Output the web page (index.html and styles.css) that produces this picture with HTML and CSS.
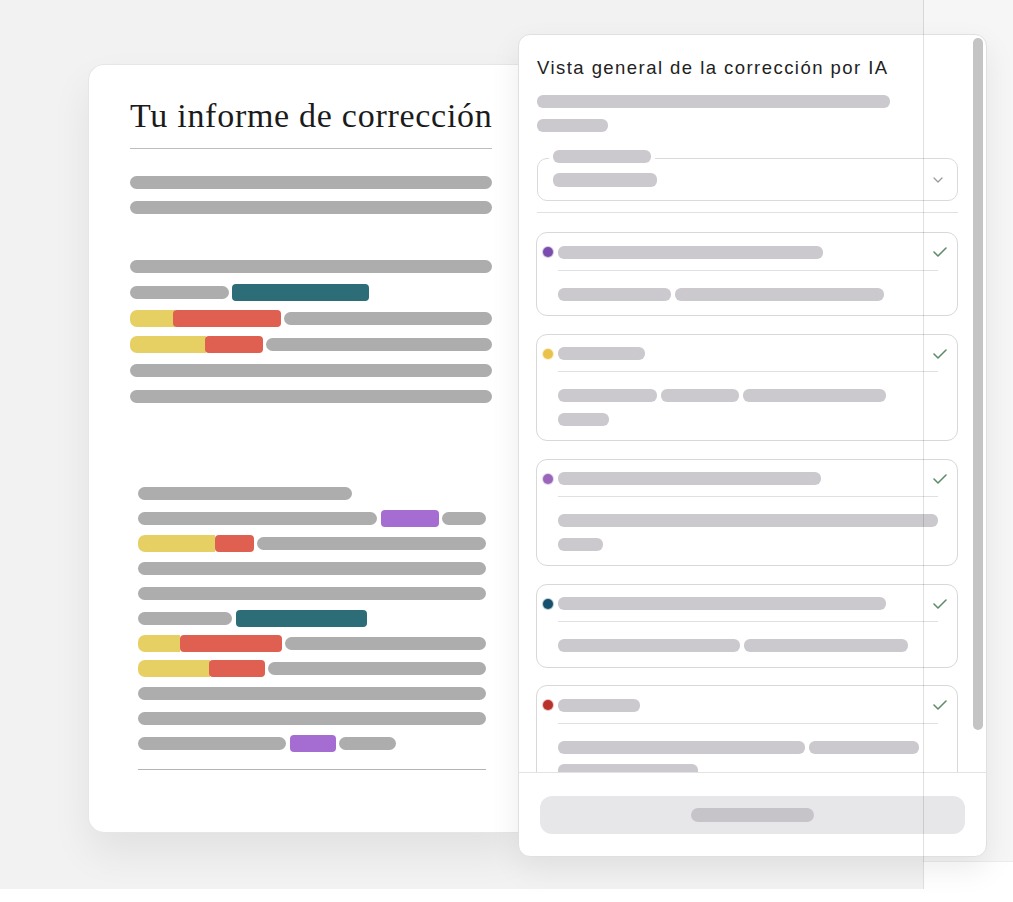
FILE: index.html
```html
<!DOCTYPE html>
<html lang="es">
<head>
<meta charset="utf-8">
<title>Informe de corrección</title>
<link rel="stylesheet" href="styles.css">
</head>
<body>
<div class="stage">
  <div class="strip"></div>
  <div class="scene">
    <article class="report">
      <h1 class="report-title">Tu informe de corrección</h1>
      <hr class="report-rule">

      <div class="para p1">
        <div class="row"><span class="g fill"></span></div>
        <div class="row"><span class="g fill"></span></div>
      </div>

      <div class="para p2">
        <div class="row"><span class="g fill"></span></div>
        <div class="row"><span class="g" style="width:99px"></span><span class="mark teal" style="width:137px"></span></div>
        <div class="row"><span class="hl"><span class="y" style="width:45px"></span><span class="r" style="width:108px;margin-left:-2px"></span></span><span class="g fill"></span></div>
        <div class="row"><span class="hl"><span class="y" style="width:76px"></span><span class="r" style="width:58px;margin-left:-1px"></span></span><span class="g fill"></span></div>
        <div class="row"><span class="g fill"></span></div>
        <div class="row"><span class="g fill"></span></div>
      </div>

      <div class="para p3">
        <div class="row"><span class="g" style="width:214px"></span></div>
        <div class="row"><span class="g" style="width:239px"></span><span class="mark purple gap1" style="width:58px"></span><span class="g fill"></span></div>
        <div class="row"><span class="hl"><span class="y" style="width:77px"></span><span class="r" style="width:39px"></span></span><span class="g fill"></span></div>
        <div class="row"><span class="g fill"></span></div>
        <div class="row"><span class="g fill"></span></div>
        <div class="row"><span class="g" style="width:94px"></span><span class="mark teal gap1" style="width:131px"></span></div>
        <div class="row"><span class="hl"><span class="y" style="width:42px"></span><span class="r" style="width:102px"></span></span><span class="g fill"></span></div>
        <div class="row"><span class="hl"><span class="y" style="width:72px"></span><span class="r" style="width:56px;margin-left:-1px"></span></span><span class="g fill"></span></div>
        <div class="row"><span class="g fill"></span></div>
        <div class="row"><span class="g fill"></span></div>
        <div class="row"><span class="g" style="width:148px"></span><span class="mark purple gap1" style="width:46px"></span><span class="g" style="width:57px"></span></div>
      </div>
      <hr class="report-rule end">
    </article>

    <aside class="panel">
      <div class="panel-scroll">
        <div class="panel-body">
          <h2 class="panel-title">Vista general de la corrección por IA</h2>
          <div class="sk" style="width:353px;margin-top:16px"></div>
          <div class="sk" style="width:71px;margin-top:11px"></div>

          <div class="select">
            <span class="select-legend"><span class="sk" style="width:98px"></span></span>
            <span class="sk" style="width:104px;height:14px"></span>
            <svg class="chev" width="10" height="6" viewBox="0 0 10 6"><polyline points="1,1 5,5 9,1" fill="none" stroke="#9a9a9a" stroke-width="1.3" stroke-linecap="round" stroke-linejoin="round"/></svg>
          </div>
          <div class="divider"></div>

          <div class="card first">
            <div class="card-head">
              <span class="dot d-purple"></span><span class="sk" style="width:265px"></span>
              <svg class="check" width="14" height="10" viewBox="0 0 14 10"><polyline points="1,5 5,9 13,1" fill="none" stroke="#5f8c6b" stroke-width="1.6" stroke-linecap="round" stroke-linejoin="round"/></svg>
            </div>
            <div class="card-rule"></div>
            <div class="card-body">
              <div class="sk-row"><span class="sk" style="width:113px"></span><span class="sk" style="width:209px"></span></div>
            </div>
          </div>

          <div class="card">
            <div class="card-head">
              <span class="dot d-yellow"></span><span class="sk" style="width:87px"></span>
              <svg class="check" width="14" height="10" viewBox="0 0 14 10"><polyline points="1,5 5,9 13,1" fill="none" stroke="#5f8c6b" stroke-width="1.6" stroke-linecap="round" stroke-linejoin="round"/></svg>
            </div>
            <div class="card-rule"></div>
            <div class="card-body">
              <div class="sk-row"><span class="sk" style="width:99px"></span><span class="sk" style="width:78px"></span><span class="sk" style="width:143px"></span></div>
              <div class="sk-row"><span class="sk" style="width:51px"></span></div>
            </div>
          </div>

          <div class="card">
            <div class="card-head">
              <span class="dot d-violet"></span><span class="sk" style="width:263px"></span>
              <svg class="check" width="14" height="10" viewBox="0 0 14 10"><polyline points="1,5 5,9 13,1" fill="none" stroke="#5f8c6b" stroke-width="1.6" stroke-linecap="round" stroke-linejoin="round"/></svg>
            </div>
            <div class="card-rule"></div>
            <div class="card-body">
              <div class="sk-row"><span class="sk" style="width:380px"></span></div>
              <div class="sk-row"><span class="sk" style="width:45px"></span></div>
            </div>
          </div>

          <div class="card">
            <div class="card-head">
              <span class="dot d-navy"></span><span class="sk" style="width:328px"></span>
              <svg class="check" width="14" height="10" viewBox="0 0 14 10"><polyline points="1,5 5,9 13,1" fill="none" stroke="#5f8c6b" stroke-width="1.6" stroke-linecap="round" stroke-linejoin="round"/></svg>
            </div>
            <div class="card-rule"></div>
            <div class="card-body">
              <div class="sk-row"><span class="sk" style="width:182px"></span><span class="sk" style="width:164px"></span></div>
            </div>
          </div>

          <div class="card">
            <div class="card-head">
              <span class="dot d-red"></span><span class="sk" style="width:82px"></span>
              <svg class="check" width="14" height="10" viewBox="0 0 14 10"><polyline points="1,5 5,9 13,1" fill="none" stroke="#5f8c6b" stroke-width="1.6" stroke-linecap="round" stroke-linejoin="round"/></svg>
            </div>
            <div class="card-rule"></div>
            <div class="card-body">
              <div class="sk-row"><span class="sk" style="width:247px"></span><span class="sk" style="width:110px"></span></div>
              <div class="sk-row"><span class="sk" style="width:140px"></span></div>
            </div>
          </div>
        </div>
        <div class="scrollbar"></div>
      </div>
      <div class="panel-foot">
        <div class="btn"><span class="btn-label"></span></div>
      </div>
    </aside>
  </div>
  <div class="seam"></div>
</div>
</body>
</html>
```

FILE: styles.css
```css
* { box-sizing: border-box; }
html, body { margin: 0; padding: 0; background: #ffffff; }
body { width: 1013px; height: 902px; overflow: hidden; font-family: "Liberation Sans", Arial, sans-serif; }

.stage {
  position: relative;
  width: 923px;
  height: 889px;
  background: #f2f2f2;
}
.strip {
  position: absolute;
  left: 923px;
  top: 0;
  width: 90px;
  height: 862px;
  background: #f6f6f6;
  border-bottom: 1px solid #ececec;
}
.seam {
  position: absolute;
  left: 923px;
  top: 0;
  width: 1px;
  height: 889px;
  background: rgba(0, 0, 0, 0.12);
  z-index: 5;
}
.scene {
  position: relative;
  display: flex;
  align-items: flex-start;
  padding-left: 88px;
}

/* ---------- left report card ---------- */
.report {
  flex: none;
  width: 430px;
  height: 769px;
  margin-top: 64px;
  background: #ffffff;
  border: 1px solid #e6e6e6;
  border-right: none;
  border-radius: 16px 0 0 16px;
  box-shadow: 0 20px 40px rgba(0, 0, 0, 0.07);
  padding: 34px 26px 0 41px;
}
.report-title {
  margin: 0;
  font-family: "Liberation Serif", "Times New Roman", serif;
  font-weight: normal;
  font-size: 34px;
  line-height: 34px;
  letter-spacing: 0.72px;
  color: #1b1b1b;
  white-space: nowrap;
}
.report-rule {
  margin: 15px 0 0 0;
  border: none;
  height: 1px;
  background: #bdbdbd;
}
.report-rule.end {
  margin: 13px 6px 0 8px;
  background: #b4b4b4;
}
.para { display: flex; flex-direction: column; }
.p1 { margin-top: 21px; }
.p1 .row { height: 25px; }
.p2 { margin-top: 33px; }
.p2 .row { height: 26px; }
.p3 { margin-top: 72px; padding: 0 6px 0 8px; }
.p3 .row { height: 25px; }

.row { display: flex; align-items: center; gap: 3px; }
.g {
  height: 13px;
  background: #adadad;
  border-radius: 7px;
  flex: none;
}
.g.fill { flex: 1; }
.gap1 { margin-left: 1px; }
.mark {
  height: 17px;
  border-radius: 4px;
  flex: none;
}
.mark.teal { background: #2c6d78; }
.mark.purple { background: #a56cd1; }
.hl { display: flex; align-items: center; flex: none; }
.hl .y {
  height: 17px;
  background: #e7d063;
  border-radius: 7px 0 0 7px;
}
.hl .r {
  height: 17px;
  background: #df5f50;
  border-radius: 4px;
}

/* ---------- right panel ---------- */
.panel {
  position: relative;
  z-index: 2;
  flex: none;
  width: 469px;
  height: 823px;
  margin-top: 34px;
  background: #ffffff;
  border: 1px solid #e0e0e0;
  border-radius: 12px;
  box-shadow: 0 12px 30px rgba(0, 0, 0, 0.08);
  display: flex;
  flex-direction: column;
  overflow: hidden;
}
.panel-scroll {
  height: 737px;
  display: flex;
  overflow: hidden;
  flex: none;
}
.panel-body {
  width: 439px;
  padding: 22px 0 0 18px;
  flex: none;
  display: flex;
  flex-direction: column;
}
.panel-body > * { flex-shrink: 0; }
.panel-title {
  margin: 0;
  font-family: "Liberation Sans", Arial, sans-serif;
  font-weight: normal;
  font-size: 18.5px;
  line-height: 22px;
  letter-spacing: 1.45px;
  color: #222222;
  white-space: nowrap;
}
.sk {
  display: block;
  height: 13px;
  background: #cbc9ce;
  border-radius: 6px;
  flex: none;
}
.scrollbar {
  width: 10px;
  height: 692px;
  margin: 3px 0 0 15px;
  background: #c4c4c4;
  border-radius: 5px;
  flex: none;
}

.select {
  position: relative;
  width: 421px;
  height: 43px;
  margin-top: 26px;
  border: 1.5px solid #dadada;
  border-radius: 10px;
  display: flex;
  align-items: center;
  padding-left: 15px;
}
.select-legend {
  position: absolute;
  left: 11px;
  top: -9px;
  padding: 0 4px;
  background: #ffffff;
}
.chev { margin-left: auto; margin-right: 14px; margin-top: 1px; flex: none; }

.divider {
  width: 421px;
  height: 1px;
  margin-top: 11px;
  background: #e1e1e1;
}

.card {
  width: 422px;
  margin-left: -1px;
  margin-top: 17.5px;
  border: 1.5px solid #d8d8d8;
  border-radius: 11px;
  padding: 12.5px 10px 14.5px 6px;
}
.card.first { margin-top: 19px; }
.card-head {
  height: 13px;
  display: flex;
  align-items: center;
}
.dot {
  width: 10px;
  height: 10px;
  border-radius: 50%;
  margin-right: 5px;
  flex: none;
}
.d-purple { background: #7a4cad; box-shadow: 0 0 0 1px rgba(122, 76, 173, 0.3); }
.d-yellow { background: #e9c24c; box-shadow: 0 0 0 1px rgba(233, 194, 76, 0.3); }
.d-violet { background: #9a66b9; box-shadow: 0 0 0 1px rgba(154, 102, 185, 0.3); }
.d-navy { background: #17506d; box-shadow: 0 0 0 1px rgba(23, 80, 109, 0.3); }
.d-red { background: #b8322b; box-shadow: 0 0 0 1px rgba(184, 50, 43, 0.3); }
.check { margin-left: auto; flex: none; }
.card-rule {
  height: 1px;
  margin: 11px 9px 0 15px;
  background: #e0e0e0;
}
.card-body {
  margin-top: 17px;
  padding-left: 15px;
  display: flex;
  flex-direction: column;
  gap: 10.5px;
}
.sk-row { display: flex; gap: 4px; }

.panel-foot {
  height: 84px;
  flex: none;
  border-top: 1px solid #e3e3e3;
  padding: 23px 0 0 21px;
}
.btn {
  width: 425px;
  height: 38px;
  border-radius: 12px;
  background: #e7e6e9;
  display: flex;
  align-items: center;
  justify-content: center;
}
.btn-label {
  width: 123px;
  height: 14px;
  border-radius: 7px;
  background: #c6c4c9;
}
```
